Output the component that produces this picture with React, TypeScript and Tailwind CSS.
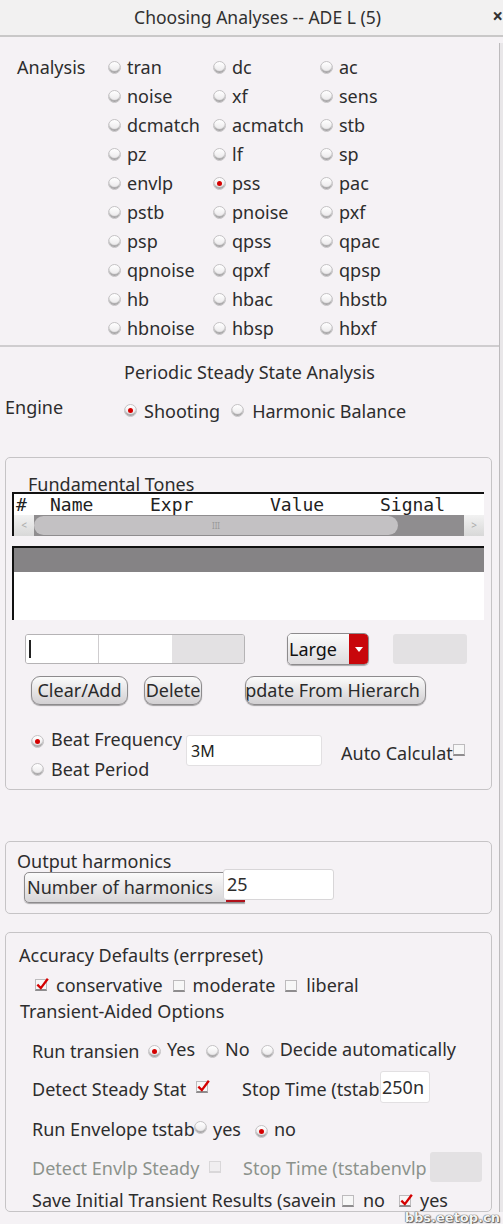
import React from "react";

const F = "font-['Noto_Sans',sans-serif]";

const Radio = ({ on }: { on?: boolean }) => (
  <span className="inline-flex h-[13px] w-[13px] shrink-0 items-center justify-center rounded-full border border-[#c4c2c4] bg-gradient-to-b from-[#ffffff] to-[#e8e6e8] shadow-[inset_0_-2px_1px_rgba(0,0,0,0.28)]">
    {on && <span className="h-[5px] w-[5px] rounded-full bg-[#d40000]" />}
  </span>
);

const Check = ({ on, disabled }: { on?: boolean; disabled?: boolean }) => (
  <span
    className={
      "relative inline-block h-[12px] w-[12px] shrink-0 border border-b-2 " +
      (disabled ? "border-[#d9d7d9] bg-[#f0eef0]" : "border-[#bdbbbd] border-b-[#8e8c8e] bg-[#f7f7f7]")
    }
  >
    {on && (
      <svg viewBox="0 0 12 12" className="absolute -left-[1px] -top-[3px] h-[14px] w-[14px]">
        <path d="M2 6.5 L5 9.5 L11 1.5" fill="none" stroke="#d40000" strokeWidth="2" />
      </svg>
    )}
  </span>
);

const rows = [
  ["tran", "dc", "ac"],
  ["noise", "xf", "sens"],
  ["dcmatch", "acmatch", "stb"],
  ["pz", "lf", "sp"],
  ["envlp", "pss", "pac"],
  ["pstb", "pnoise", "pxf"],
  ["psp", "qpss", "qpac"],
  ["qpnoise", "qpxf", "qpsp"],
  ["hb", "hbac", "hbstb"],
  ["hbnoise", "hbsp", "hbxf"],
];

const Btn = ({ children, w }: { children: React.ReactNode; w: string }) => (
  <div
    className={
      "flex h-[29px] items-center justify-center overflow-hidden whitespace-nowrap rounded-[9px] border border-[#8d8b8d] bg-gradient-to-b from-[#fbfbfb] to-[#d2d0d2] shadow-[0_1px_1px_rgba(0,0,0,0.35)] text-[18px] text-[#2a2a2a] " +
      w
    }
  >
    {children}
  </div>
);

export default function App() {
  return (
    <div className={"relative h-[1224px] w-[503px] overflow-hidden bg-[#f5f2f5] text-[#2d2d2d] " + F}>
      {/* Title bar */}
      <div className="relative flex h-[37px] items-center justify-center border-b-2 border-[#c9c8c8] bg-[#f2f1f1] pl-[12px] text-[17.5px] text-[#303030]">
        Choosing Analyses -- ADE L (5)
        <span className="absolute right-[0px] top-[7px] text-[19px] font-bold leading-none text-[#333]">×</span>
      </div>

      <div className="flex">
        <div className="w-[499px]">
          {/* Analysis section */}
          <div className="border-b-2 border-[#cfcdcf] pb-[2px] pt-[16px] text-[18px]">
            <div className="grid grid-cols-[108px_105px_107px_1fr]">
              {rows.map((r, i) => (
                <React.Fragment key={i}>
                  <div className="flex h-[29px] items-center pl-[17px]">{i === 0 ? "Analysis" : ""}</div>
                  {r.map((n) => (
                    <div key={n} className="flex h-[29px] items-center gap-[6px]">
                      <Radio on={n === "pss"} />
                      <span>{n}</span>
                    </div>
                  ))}
                </React.Fragment>
              ))}
            </div>
          </div>

          {/* PSS header */}
          <div className="mt-[13px] flex h-[24px] items-center justify-center text-[18px]">
            Periodic Steady State Analysis
          </div>
          <div className="mt-[13px] flex h-[26px] items-center text-[18px]">
            <div className="w-[124px] pb-[5px] pl-[5px]">Engine</div>
            <Radio on />
            <span className="ml-[7px] mt-[2px]">Shooting</span>
            <span className="ml-[11px]">
              <Radio />
            </span>
            <span className="ml-[8px] mt-[2px]">Harmonic Balance</span>
          </div>

          {/* Fundamental Tones group */}
          <div className="ml-[5px] mt-[34px] h-[333px] w-[487px] rounded-[5px] border border-[#c6c4c6] text-[18px]">
            <div className="relative ml-[22px] mt-[14px] h-[20px] leading-[25px]">Fundamental Tones</div>
            <div className="relative ml-[6px] w-[472px]">
              <div className="border-l-2 border-t-2 border-[#111] bg-white">
                <div className="flex h-[21px] items-center font-['DejaVu_Sans_Mono',monospace] text-[18px] text-[#222]">
                  <span className="w-[36px] pl-[2px]">#</span>
                  <span className="w-[100px]">Name</span>
                  <span className="w-[120px]">Expr</span>
                  <span className="w-[110px]">Value</span>
                  <span>Signal</span>
                </div>
                <div className="flex h-[21px] bg-[#8f8d8f]">
                  <div className="flex w-[20px] items-center justify-center bg-gradient-to-b from-[#f2f2f2] to-[#d8d8d8] text-[10px] text-[#aaa]">
                    &lt;
                  </div>
                  <div className="flex flex-1 items-center">
                    <div className="flex h-[19px] w-[364px] items-center justify-center rounded-full bg-[#c3c1c3] text-[8px] text-[#999]">
                      III
                    </div>
                  </div>
                  <div className="flex w-[20px] items-center justify-center bg-gradient-to-b from-[#f2f2f2] to-[#d8d8d8] text-[10px] text-[#aaa]">
                    &gt;
                  </div>
                </div>
              </div>
              <div className="mt-[10px] h-[74px] border-l-2 border-t-2 border-[#111] bg-white">
                <div className="h-[24px] bg-[#858385]" />
              </div>
            </div>

            {/* inputs row */}
            <div className="mt-[14px] flex h-[30px] items-center">
              <div className="ml-[19px] flex h-[30px] w-[220px] overflow-hidden rounded-[3px] border border-[#b5b3b5]">
                <div className="flex w-[72px] items-center bg-white pl-[3px]">
                  <span className="h-[18px] w-[1.5px] bg-[#222]" />
                </div>
                <div className="w-[74px] border-l border-[#cfcdcf] bg-white" />
                <div className="flex-1 bg-[#e3e1e3]" />
              </div>
              <div className="ml-[42px] flex h-[32px] w-[82px] overflow-hidden rounded-[5px] border border-[#8d8b8d] shadow-[0_1px_1px_rgba(0,0,0,0.3)]">
                <div className="flex flex-1 items-center bg-gradient-to-b from-[#fbfbfb] to-[#dedcde] pl-[1px] text-[18px] text-[#111]">
                  Large
                </div>
                <div className="flex w-[19px] items-center justify-center bg-[#c8070b]">
                  <svg viewBox="0 0 8 5" className="h-[5px] w-[8px]">
                    <path d="M0 0 L8 0 L4 5 Z" fill="#fff" />
                  </svg>
                </div>
              </div>
              <div className="ml-[24px] h-[30px] w-[74px] rounded-[3px] bg-[#e3e1e3]" />
            </div>

            {/* buttons */}
            <div className="mt-[12px] flex items-center">
              <div className="ml-[25px]">
                <Btn w="w-[97px]">Clear/Add</Btn>
              </div>
              <div className="ml-[16px]">
                <Btn w="w-[58px]">Delete</Btn>
              </div>
              <div className="ml-[43px]">
                <Btn w="w-[181px]">
                  <span className="-ml-[6px]">pdate From Hierarch</span>
                </Btn>
              </div>
            </div>

            {/* beat */}
            <div className="mt-[21px] flex">
              <div className="ml-[25px] flex w-[155px] flex-col">
                <div className="flex h-[30px] items-center gap-[7px] whitespace-nowrap">
                  <Radio on />
                  <span className="-mt-[3px]">Beat Frequency</span>
                </div>
                <div className="-mt-[2px] flex h-[30px] items-center gap-[7px] whitespace-nowrap">
                  <Radio />
                  <span>Beat Period</span>
                </div>
              </div>
              <div className="mt-[9px] flex h-[31px] w-[136px] items-center rounded-[3px] border border-[#e2e0e2] bg-white pl-[4px] text-[16px] text-[#222]">
                3M
              </div>
              <div className="ml-[19px] mt-[11px] flex h-[30px] items-center whitespace-nowrap">
                <span className="mt-[2px]">Auto Calculat</span>
                <span className="-mt-[6px]">
                  <Check />
                </span>
              </div>
            </div>
          </div>

          {/* Output harmonics */}
          <div className="ml-[5px] mt-[51px] h-[73px] w-[487px] rounded-[5px] border border-[#c6c4c6] text-[18px]">
            <div className="ml-[11px] mt-[8px] h-[21px] leading-[22px]">Output harmonics</div>
            <div className="relative ml-[18px] flex items-start">
              <div className="mt-[1px] flex h-[31px] w-[221px] items-center rounded-l-[5px] border border-[#8d8b8d] bg-gradient-to-b from-[#fbfbfb] to-[#d8d6d8] pl-[2px] shadow-[0_1px_1px_rgba(0,0,0,0.3)]">
                Number of harmonics
              </div>
              <div className="relative -ml-[22px] -mt-[2px] flex h-[31px] w-[111px] items-center rounded-[3px] border border-[#d8d6d8] bg-white pl-[3px]">
                25
                <span className="absolute -bottom-[3px] left-[2px] h-[2px] w-[19px] bg-[#b0101a]" />
              </div>
            </div>
          </div>

          {/* Accuracy group */}
          <div className="ml-[5px] mt-[18px] h-[280px] w-[487px] rounded-[5px] border border-[#c6c4c6] text-[18px]">
            <div className="ml-[13px] mt-[11px] leading-[22px]">Accuracy Defaults (errpreset)</div>
            <div className="ml-[29px] mt-[8px] flex h-[22px] items-center">
              <Check on />
              <span className="ml-[9px]">conservative</span>
              <span className="ml-[10px]">
                <Check />
              </span>
              <span className="ml-[8px]">moderate</span>
              <span className="ml-[10px]">
                <Check />
              </span>
              <span className="ml-[9px]">liberal</span>
            </div>
            <div className="ml-[14px] mt-[4px] leading-[22px]">Transient-Aided Options</div>

            <div className="ml-[26px] mt-[17px] flex h-[24px] items-center whitespace-nowrap">
              <span className="w-[116px] overflow-hidden">Run transien</span>
              <Radio on />
              <span className="ml-[6px] -mt-[3px]">Yes</span>
              <span className="ml-[11px]">
                <Radio />
              </span>
              <span className="ml-[6px] -mt-[3px]">No</span>
              <span className="ml-[11px]">
                <Radio />
              </span>
              <span className="ml-[6px] -mt-[3px]">Decide automatically</span>
            </div>

            <div className="ml-[26px] mt-[11px] flex h-[30px] items-center whitespace-nowrap">
              <span className="w-[164px] overflow-hidden">Detect Steady Stat</span>
              <span className="-mt-[6px]">
                <Check on />
              </span>
              <span className="ml-[34px] w-[138px] overflow-hidden">Stop Time (tstab</span>
              <div className="-mt-[4px] flex h-[32px] w-[50px] items-center rounded-[3px] border border-[#e2e0e2] bg-white pl-[1px]">
                250n
              </div>
            </div>

            <div className="ml-[26px] mt-[12px] flex h-[26px] items-center whitespace-nowrap">
              <span className="w-[162px]">Run Envelope tstab</span>
              <span className="-mt-[4px]">
                <Radio />
              </span>
              <span className="ml-[6px]">yes</span>
              <span className="ml-[14px] -mt-[4px]">
                <Radio on />
              </span>
              <span className="ml-[6px]">no</span>
            </div>

            <div className="ml-[26px] mt-[11px] flex h-[30px] items-center whitespace-nowrap text-[#8c928c]">
              <span className="w-[177px] overflow-hidden">Detect Envlp Steady</span>
              <span className="-mt-[4px]">
                <Check disabled />
              </span>
              <span className="ml-[22px] w-[187px] overflow-hidden">Stop Time (tstabenvlp</span>
              <div className="-mt-[2px] h-[30px] w-[52px] rounded-[3px] bg-[#e3e1e3]" />
            </div>

            <div className="ml-[26px] mt-[4px] flex h-[26px] items-center whitespace-nowrap">
              <span className="w-[306px] overflow-hidden">Save Initial Transient Results (savein</span>
              <span className="ml-[4px]">
                <Check />
              </span>
              <span className="ml-[9px]">no</span>
              <span className="ml-[14px]">
                <Check on />
              </span>
              <span className="ml-[9px]">yes</span>
            </div>
          </div>
        </div>
        {/* right scrollbar edge */}
        <div className="mt-[6px] w-[4px] border-l border-[#bdbbbd] bg-[#e9e7e9]" />
      </div>

      {/* watermark */}
      <div className="absolute bottom-[0px] right-[3px] font-['DejaVu_Sans',sans-serif] text-[13px] font-bold leading-none text-[#f4f4f4] [text-shadow:0_0_1px_#444,0_0_1px_#444,1px_1px_1px_#666]">
        bbs.eetop.cn
      </div>
    </div>
  );
}
